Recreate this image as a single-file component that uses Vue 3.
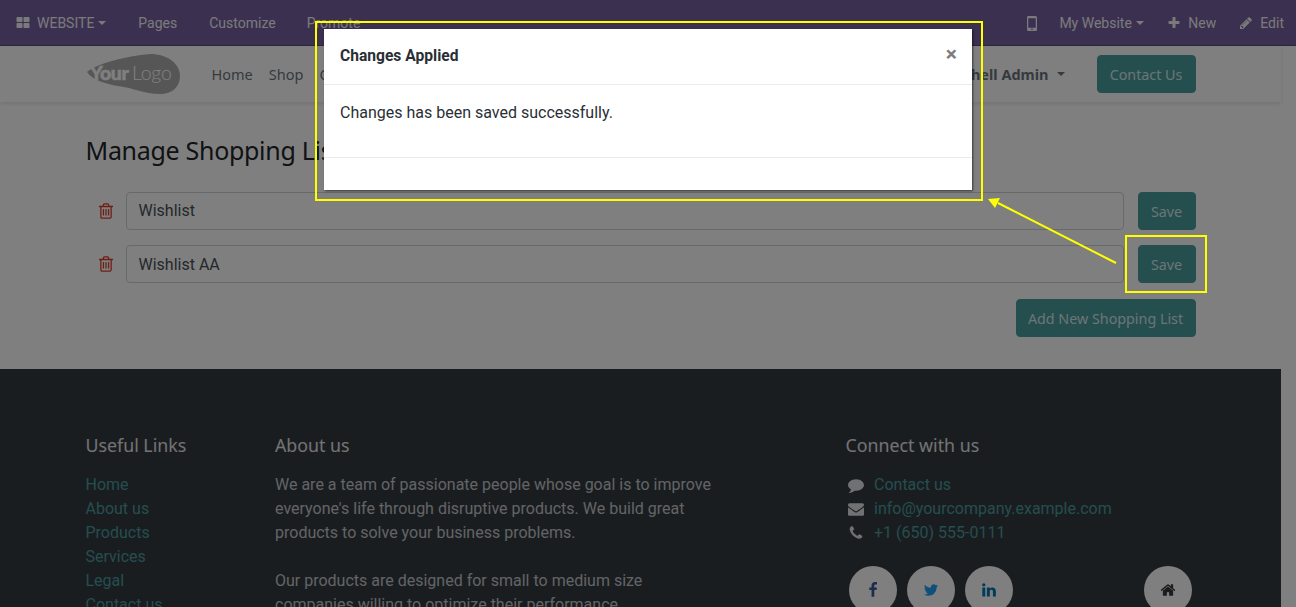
<script setup>
const icons = {
  th: 'M832 1024v384q0 52-38 90t-90 38h-512q-52 0-90-38t-38-90v-384q0-52 38-90t90-38h512q52 0 90 38t38 90zm0-768v384q0 52-38 90t-90 38h-512q-52 0-90-38t-38-90v-384q0-52 38-90t90-38h512q52 0 90 38t38 90zm896 768v384q0 52-38 90t-90 38h-512q-52 0-90-38t-38-90v-384q0-52 38-90t90-38h512q52 0 90 38t38 90zm0-768v384q0 52-38 90t-90 38h-512q-52 0-90-38t-38-90v-384q0-52 38-90t90-38h512q52 0 90 38t38 90z',
  plus: 'M1600 736v192q0 40-28 68t-68 28h-416v416q0 40-28 68t-68 28h-192q-40 0-68-28t-28-68v-416h-416q-40 0-68-28t-28-68v-192q0-40 28-68t68-28h416v-416q0-40 28-68t68-28h192q40 0 68 28t28 68v416h416q40 0 68 28t28 68z',
  pencil: 'M491 1536l91-91-235-235-91 91v107h128v128h107zm523-928q0-22-22-22-10 0-17 7l-542 542q-7 7-7 17 0 22 22 22 10 0 17-7l542-542q7-7 7-17zm-54-192l416 416-832 832h-416v-416zm683 96q0 53-37 90l-166 166-416-416 166-165q36-38 90-38 53 0 91 38l235 234q37 39 37 91z',
  trash: 'M704 736v576q0 14-9 23t-23 9h-64q-14 0-23-9t-9-23v-576q0-14 9-23t23-9h64q14 0 23 9t9 23zm256 0v576q0 14-9 23t-23 9h-64q-14 0-23-9t-9-23v-576q0-14 9-23t23-9h64q14 0 23 9t9 23zm256 0v576q0 14-9 23t-23 9h-64q-14 0-23-9t-9-23v-576q0-14 9-23t23-9h64q14 0 23 9t9 23zm128 724v-948h-896v948q0 22 7 40.5t14.5 27 10.5 8.5h832q3 0 10.5-8.5t14.5-27 7-40.5zm-672-1076h448l-48-117q-7-9-17-11h-317q-10 2-17 11zm928 32v64q0 14-9 23t-23 9h-96v948q0 83-47 143.5t-113 60.5h-832q-66 0-113-58.5t-47-141.5v-952h-96q-14 0-23-9t-9-23v-64q0-14 9-23t23-9h309l70-167q15-37 54-63t79-26h320q40 0 79 26t54 63l70 167h309q14 0 23 9t9 23z',
  envelope: 'M1792 710v794q0 66-47 113t-113 47h-1472q-66 0-113-47t-47-113v-794q44 49 101 87 362 246 497 345 57 42 92.5 65.5t94.5 48 110 24.5h2q51 0 110-24.5t94.5-48 92.5-65.5q170-123 498-345 57-39 100-87zm0-294q0 79-49 151t-122 123q-376 261-468 325-10 7-42.5 30.5t-54 38-52 32.5-57.5 27-50 9h-2q-23 0-50-9t-57.5-27-52-32.5-54-38-42.5-30.5q-91-64-262-182.5t-205-142.5q-62-42-117-115.5t-55-136.5q0-78 41.5-130t118.5-52h1472q65 0 112.5 47t47.5 113z',
  phone: 'M1600 1240q0 27-10 70.5t-21 68.5q-21 50-122 106-94 51-186 51-27 0-53-3.5t-57.5-12.5-47-14.5-55.5-20.5-49-18q-98-35-175-83-127-79-264-216t-216-264q-48-77-83-175-3-9-18-49t-20.5-55.5-14.5-47-12.5-57.5-3.5-53q0-92 51-186 56-101 106-122 25-11 68.5-21t70.5-10q14 0 21 3 18 6 53 76 11 19 30 54t35 63.5 31 53.5q3 4 17.5 25t21.5 35.5 7 28.5q0 20-28.5 50t-62 55-62 53-28.5 46q0 9 5 22.5t8.5 20.5 14 24 11.5 19q76 137 174 235t235 174q2 1 19 11.5t24 14 20.5 8.5 22.5 5q18 0 46-28.5t53-62 55-62 50-28.5q14 0 28.5 7t35.5 21.5 25 17.5q25 15 53.5 31t63.5 35 54 30q70 35 76 53 3 7 3 21z',
  comment: 'M1792 896q0 174-120 321.5t-326 233-450 85.5q-70 0-145-8-198 175-460 242-49 14-114 22-17 2-30.5-9t-17.5-29v-1q-3-4-.5-12t2-10 4.5-9.5l6-9 7-8.5 8-9q7-8 31-34.5t34.5-38 31-39.5 32.5-51 27-59 26-76q-157-89-247.5-220t-90.5-281q0-130 71-248.5t191-204.5 286-136.5 348-50.5q244 0 450 85.5t326 233 120 321.5z',
  facebook: 'M1343 12v264h-157q-86 0-116 36t-30 108v189h293l-39 296h-254v759h-306v-759h-255v-296h255v-218q0-186 104-288.5t277-102.5q147 0 228 12z',
  twitter: 'M1684 408q-67 98-162 167 1 14 1 42 0 130-38 259.5t-115.5 248.5-184.5 210.5-258 146-323 54.5q-271 0-496-145 35 4 78 4 225 0 401-138-105-2-188-64.5t-114-159.5q33 5 61 5 43 0 85-11-112-23-185.5-111.5t-73.5-205.5v-4q68 38 146 41-66-44-105-115t-39-154q0-88 44-163 121 149 294.5 238.5t371.5 99.5q-8-38-8-74 0-134 94.5-228.5t228.5-94.5q140 0 236 102 109-21 200-76-35 109-138 176 90-10 183-50z',
  linkedin: 'M477 625v991h-330v-991h330zm21-306q1 73-50.5 122t-135.5 49h-2q-82 0-132-49t-50-122q0-74 51.5-122.5t134.5-48.5 133 48.5 51 122.5zm1166 729v568h-329v-530q0-105-40.5-164.5t-126.5-59.5q-63 0-105.5 34.5t-63.5 85.5q-11 30-11 81v553h-329q2-399 2-647t-1-296l-1-48h329v144h-2q20-32 41-56t56.5-52 87-43.5 114.5-15.5q171 0 275 113.5t104 332.5z',
  home: 'M1472 992v480q0 26-19 45t-45 19h-384v-384h-256v384h-384q-26 0-45-19t-19-45v-480q0-1 .5-3t.5-3l575-474 575 474q1 2 1 6zm223-69l-62 74q-8 9-21 11h-3q-13 0-21-7l-692-577-692 577q-12 8-24 7-13-2-21-11l-62-74q-8-10-7-23.5t11-21.5l719-599q32-26 76-26t76 26l244 204v-195q0-14 9-23t23-9h192q14 0 23 9t9 23v408l219 182q10 8 11 21.5t-7 23.5z'
}
const lists = ['Wishlist', 'Wishlist AA']
const links = ['Home', 'About us', 'Products', 'Services', 'Legal', 'Contact us']
const contacts = [
  { icon: 'comment', text: 'Contact us' },
  { icon: 'envelope', text: 'info@yourcompany.example.com' },
  { icon: 'phone', text: '+1 (650) 555-0111' }
]
const socials = [
  { icon: 'facebook', cls: 'fb' },
  { icon: 'twitter', cls: 'tw' },
  { icon: 'linkedin', cls: 'li' }
]
</script>

<template>
  <div class="page">
    <div class="topbar">
      <div class="tb-left">
        <span class="tb-item first">
          <svg class="ic i14" viewBox="0 0 1792 1792"><path :d="icons.th" /></svg>
          <span class="tb-text">WEBSITE</span><i class="caret"></i>
        </span>
        <span class="tb-item pages">Pages</span>
        <span class="tb-item cust">Customize</span>
        <span class="tb-item">Promote</span>
      </div>
      <div class="tb-right">
        <svg class="mobile" viewBox="0 0 10 15"><path fill-rule="evenodd" d="M1.5 0h7A1.5 1.5 0 0 1 10 1.500v12A1.500 1.500 0 0 1 8.500 15h-7A1.500 1.500 0 0 1 0 13.500v-12A1.500 1.500 0 0 1 1.500 0zM1.300 2.200v9.600h7.400V2.200zM5 12.400a.8.8 0 1 0 0 1.600.8.8 0 0 0 0-1.600z" /></svg>
        <span class="tb-text mysite">My Website<i class="caret"></i></span>
        <span class="tb-text newb"><svg class="ic i14" viewBox="0 0 1792 1792"><path :d="icons.plus" /></svg>New</span>
        <span class="tb-text edit"><svg class="ic i14" viewBox="0 0 1792 1792"><path :d="icons.pencil" /></svg>Edit</span>
      </div>
    </div>

    <header class="site-header">
      <div class="container hdr">
        <svg class="logo" viewBox="0 0 94 40">
          <path d="M1 18C10 10 40 2 64 0C82 0 94 10 94 22C94 33 86 40 74 40C58 40 48 34 32 32C20 30 6 26 1 18z" fill="#acacac" />
          <text x="4" y="26" class="logo-a">Your</text>
          <text x="46" y="26" class="logo-b">Logo</text>
        </svg>
        <nav class="menu">
          <a>Home</a><a>Shop</a><a>Contact us</a>
        </nav>
        <span class="user">Mitchell Admin<i class="caret dark"></i></span>
        <button class="btn contact">Contact Us</button>
      </div>
    </header>

    <main class="container main">
      <h1 class="title">Manage Shopping Lists</h1>
      <div v-for="name in lists" :key="name" class="row">
        <svg class="trash" viewBox="0 0 1792 1792"><path :d="icons.trash" /></svg>
        <div class="input">{{ name }}</div>
        <button class="btn">Save</button>
      </div>
      <div class="add-row"><button class="btn">Add New Shopping List</button></div>
    </main>

    <footer class="footer">
      <div class="container ft">
        <section class="col c1">
          <h5>Useful Links</h5>
          <a v-for="l in links" :key="l">{{ l }}</a>
        </section>
        <section class="col c2">
          <h5>About us</h5>
          <p>We are a team of passionate people whose goal is to improve everyone's life through disruptive products. We build great products to solve your business problems.</p>
          <p>Our products are designed for small to medium size companies willing to optimize their performance.</p>
        </section>
        <section class="col c3">
          <h5>Connect with us</h5>
          <div v-for="c in contacts" :key="c.text" class="contact-line">
            <svg class="ic cicon" viewBox="0 0 1792 1792"><path :d="icons[c.icon]" /></svg>
            <a>{{ c.text }}</a>
          </div>
          <div class="socials">
            <span v-for="s in socials" :key="s.icon" class="circle" :class="s.cls">
              <svg viewBox="0 0 1792 1792"><path :d="icons[s.icon]" /></svg>
            </span>
            <span class="circle home">
              <svg viewBox="0 0 1792 1792"><path :d="icons.home" /></svg>
            </span>
          </div>
        </section>
      </div>
    </footer>

    <div class="backdrop"></div>

    <div class="modal">
      <div class="m-head"><strong>Changes Applied</strong><span class="close">×</span></div>
      <div class="m-body">Changes has been saved successfully.</div>
      <div class="m-foot"></div>
    </div>

    <div class="mark mark-modal"></div>
    <div class="mark mark-save"></div>
    <svg class="arrow" width="140" height="75" viewBox="0 0 140 75">
      <line x1="128" y1="66" x2="10" y2="6" stroke="#ffff00" stroke-width="2" />
      <polygon points="0,2 12,1 7,11" fill="#ffff00" />
    </svg>
  </div>
</template>

<style>
html, body { margin: 0; background: #fff; overflow: hidden; height: 607px; }
</style>

<style scoped>
* { box-sizing: border-box; }
.page {
  position: relative;
  width: 1296px;
  height: 607px;
  overflow: hidden;
  font-family: Roboto, "Liberation Sans", sans-serif;
  font-size: 16px;
  color: #2a2f35;
}
.ic { fill: currentColor; flex: none; }
.i14 { width: 14px; height: 14px; }

.topbar {
  height: 46px;
  background: #76619f;
  border-bottom: 1px solid #5a4a7c;
  display: flex;
  justify-content: space-between;
  align-items: center;
  color: #fff;
  font-size: 14px;
  width: 1296px;
  padding-top: 1px;
}
.tb-left { display: flex; align-items: center; padding-left: 16px; }
.tb-item { display: flex; align-items: center; margin-right: 34px; opacity: .93; }
.first { margin-right: 32px; }
.pages { margin-right: 32px; }
.cust { margin-right: 31px; }
.first .ic { margin-right: 7px; }
.tb-right { display: flex; align-items: center; padding-right: 12px; opacity: .93; }
.tb-text { display: inline-flex; align-items: center; }
.mobile { width: 10px; height: 15px; fill: currentColor; margin-right: 22px; margin-left: 2px; }
.mysite { margin-right: 23.5px; }
.newb { margin-right: 23px; }
.newb .ic, .edit .ic { margin-right: 7px; }
.caret {
  display: inline-block;
  margin-left: 4px;
  border-top: 4px solid currentColor;
  border-left: 4px solid transparent;
  border-right: 4px solid transparent;
}

.container { width: 1140px; margin: 0 auto; padding: 0 15px; }
.site-header {
  width: 1281px;
  height: 56px;
  background: #fff;
  box-shadow: 0 2px 4px rgba(0, 0, 0, .1);
  position: relative;
}
.hdr { display: flex; align-items: center; height: 56px; }
.logo { width: 94px; height: 40px; flex: none; }
.logo-a { font: 900 19.5px Lato, sans-serif; fill: #fff; stroke: #fff; stroke-width: .5px; letter-spacing: -.5px; }
.logo-b { font: 300 19.5px Lato, sans-serif; fill: #fff; letter-spacing: -.2px; }
.menu { display: flex; margin-left: 32px; gap: 16px; font-family: "Noto Sans", sans-serif; font-size: 14.500px; color: #6c757d; white-space: nowrap; }
.user {
  margin-left: auto;
  margin-right: 32px;
  font-family: "Noto Sans", sans-serif;
  font-weight: 700;
  font-size: 14.500px;
  color: #6c757d;
  display: inline-flex;
  align-items: center;
}
.caret.dark { margin-left: 8px; }
.btn {
  height: 38px;
  padding: 0 12.500px;
  border: 1px solid #4a9c9f;
  border-radius: 4px;
  background: #4a9c9f;
  color: #d8eaea;
  font-family: "Noto Sans", sans-serif;
  font-size: 14.300px;
  white-space: nowrap;
  flex: none;
}
.contact { width: 99px; padding: 0; }

.main { width: 1140px; margin-left: 70.500px; margin-right: 0; height: 267px; }
.title {
  margin: 0;
  padding-top: 28px;
  height: 90px;
  font-family: "Noto Sans", sans-serif;
  font-weight: 400;
  font-size: 25px;
  letter-spacing: -.3px;
  line-height: 40px;
  color: #212529;
}
.row { display: flex; align-items: center; height: 38px; margin-bottom: 15px; }
.trash { width: 18px; height: 18px; margin-left: 11px; margin-right: 11px; fill: #dc3d2a; flex: none; }
.input {
  flex: 1;
  height: 38px;
  margin-right: 14px;
  padding: 0 12px;
  border: 1px solid #ced4da;
  border-radius: 4px;
  background: #fff;
  color: #495057;
  display: flex;
  align-items: center;
  padding-bottom: 2px;
}
.row + .row .input { padding-bottom: 0; }
.row .btn { width: 58px; padding: 0; }
.add-row { display: flex; justify-content: flex-end; margin-top: 16px; }
.add-row .btn { width: 180px; padding: 0; }

.footer { width: 1281px; height: 238px; background: #343a40; color: #dee2e6; overflow: hidden; }
.ft { display: flex; padding-top: 62px; }
.col h5 {
  margin: 0 0 14px;
  font-family: "Noto Sans", sans-serif;
  font-weight: 400;
  font-size: 17.8px;
  line-height: 28px;
  color: #e4e6e8;
}
.col a { display: block; color: #4a9c9f; line-height: 24px; }
.c1 { width: 189.500px; flex: none; }
.c2 { width: 570.500px; flex: none; }
.c2 p { margin: 0 0 24px; width: 445px; line-height: 24px; color: #c4c8cc; }
.contact-line { display: flex; align-items: center; height: 24px; color: #e0e2e4; }
.cicon { width: 16px; height: 16px; margin-left: 2px; margin-right: 10.5px; }
.socials { display: flex; margin-top: 21px; margin-left: 3px; }
.circle {
  width: 48px;
  height: 48px;
  border-radius: 50%;
  background: #fff;
  display: flex;
  align-items: center;
  justify-content: center;
  margin-right: 10px;
  flex: none;
}
.circle svg { width: 16px; height: 16px; }
.fb svg { fill: #3b5998; }
.tw svg { fill: #1da1f2; }
.li svg { fill: #0077b5; }
.home { margin-left: 121px; margin-right: 0; }
.home svg { fill: #343a40; }

.backdrop { position: absolute; inset: 0; background: rgba(0, 0, 0, .5); }
.modal {
  position: absolute;
  left: 324px;
  top: 29px;
  width: 648px;
  height: 161px;
  background: #fff;
  box-shadow: 1px 1px 2px rgba(0, 0, 0, .55);
  display: flex;
  flex-direction: column;
}
.m-head {
  height: 56px;
  padding: 0 16px 2px;
  border-bottom: 1px solid #e9ecef;
  display: flex;
  align-items: center;
  justify-content: space-between;
}
.m-head strong { font-weight: 700; font-size: 15.6px; }
.close { font-size: 21px; font-weight: 700; color: #7d7d7d; margin-right: -1px; line-height: 1; position: relative; top: -1px; }
.m-body { height: 73px; padding: 16px 16px; line-height: 24px; border-bottom: 1px solid #e9ecef; }
.m-foot { flex: 1; }

.mark { position: absolute; border: 2px solid #ffff00; }
.mark-modal { left: 315px; top: 21px; width: 668px; height: 180px; }
.mark-save { left: 1125px; top: 235px; width: 82px; height: 58px; }
.arrow { position: absolute; left: 988px; top: 197px; }
</style>
